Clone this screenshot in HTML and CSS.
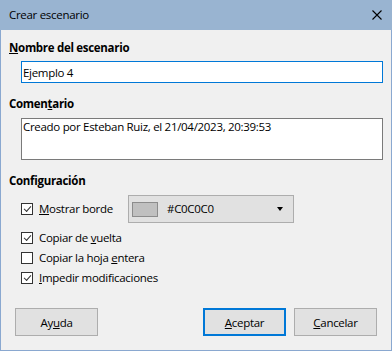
FILE: index.html
```html
<!DOCTYPE html>
<html lang="es">
<head>
  <meta charset="UTF-8" />
  <title>Crear escenario</title>
  <link rel="stylesheet" href="styles.css">
</head>
<body>
  <div class="dialog">
    <div class="titlebar">
      <span class="title">Crear escenario</span>
      <svg class="close" width="10" height="10" viewBox="0 0 10 10">
        <path d="M0.5 0.5 L9.5 9.5 M9.5 0.5 L0.5 9.5" stroke="#000" stroke-width="1.1" fill="none"/>
      </svg>
    </div>

    <div class="content">
      <div class="section-label"><u>N</u>ombre del escenario</div>
      <input class="field name-field" type="text" value="Ejemplo 4" />

      <div class="section-label gap"><span>Comen<u>t</u>ario</span></div>
      <textarea class="field comment-field">Creado por Esteban Ruiz, el 21/04/2023, 20:39:53</textarea>

      <div class="section-label gap">Configuración</div>
      <div class="options">
        <div class="option first">
          <label class="check-label wide"><span class="box checked"></span><span><u>M</u>ostrar borde</span></label>
          <div class="color-select">
            <span class="swatch"></span>
            <span class="color-name">#C0C0C0</span>
            <span class="arrow"></span>
          </div>
        </div>
        <div class="option">
          <label class="check-label"><span class="box checked"></span><span>Copiar de <u>v</u>uelta</span></label>
        </div>
        <div class="option">
          <label class="check-label"><span class="box"></span><span>Copiar la hoja <u>e</u>ntera</span></label>
        </div>
        <div class="option">
          <label class="check-label"><span class="box checked"></span><span><u>I</u>mpedir modificaciones</span></label>
        </div>
      </div>

      <div class="buttons">
        <button class="btn">Ay<u>u</u>da</button>
        <div class="spacer"></div>
        <button class="btn default"><u>A</u>ceptar</button>
        <button class="btn"><u>C</u>ancelar</button>
      </div>
    </div>
  </div>
</body>
</html>
```

FILE: styles.css
```css
body {
  margin: 0;
  padding: 0;
  font-family: 'Open Sans', 'Noto Sans', sans-serif;
  font-size: 11.5px;
  letter-spacing: -0.3px;
  color: #000;
  background: #f0f0f0;
}

.dialog {
  width: 392px;
  height: 351px;
  box-sizing: border-box;
  border: 1px solid #8aa8d0;
  border-top: none;
  background: #f0f0f0;
}

.titlebar {
  height: 30px;
  margin: 0 -1px;
  background: #99b4d1;
  display: flex;
  align-items: center;
  justify-content: space-between;
  padding: 0 10px 0 9px;
}

.title {
  line-height: 16px;
}

.close {
  display: block;
}

.content {
  padding: 10px 8px 0 8px;
}

.section-label {
  font-weight: bold;
  line-height: 16px;
  height: 16px;
}

.section-label.gap {
  margin-top: 13px;
}

.field {
  display: block;
  box-sizing: border-box;
  margin: 5px 0 0 12px;
  width: 362px;
  font-family: inherit;
  font-size: 11.5px;
  letter-spacing: -0.3px;
  color: #000;
  background: #fff;
  outline: none;
}

.name-field {
  height: 22px;
  border: 1px solid #0078d7;
  padding: 0 1px;
}

.comment-field {
  height: 42px;
  margin-top: 6px;
  border: 1px solid #7a7a7a;
  padding: 0 1px;
  line-height: 16px;
  resize: none;
  overflow: hidden;
}

.options {
  margin: 6px 0 0 12px;
}

.option {
  height: 20px;
  display: flex;
  align-items: center;
}

.option.first {
  height: 28px;
  margin-bottom: 5px;
}

.check-label {
  display: flex;
  align-items: center;
  line-height: 16px;
}

.check-label.wide {
  width: 107px;
}

.box {
  width: 12px;
  height: 12px;
  box-sizing: border-box;
  border: 1px solid #333;
  background: #fff;
  margin-right: 6px;
  position: relative;
}

.box.checked::after {
  content: "";
  position: absolute;
  left: 2px;
  top: 0px;
  width: 6px;
  height: 3px;
  border-left: 1px solid #333;
  border-bottom: 1px solid #333;
  transform: translate(0, 2px) rotate(-48deg);
  transform-origin: center;
}

.color-select {
  width: 166px;
  height: 28px;
  box-sizing: border-box;
  border: 1px solid #adadad;
  background: #e1e1e1;
  display: flex;
  align-items: center;
  padding-left: 3px;
}

.swatch {
  width: 26px;
  height: 15px;
  box-sizing: border-box;
  border: 1px solid #8c8c8c;
  background: #c0c0c0;
}

.color-name {
  margin-left: 9px;
  line-height: 16px;
  flex: 1;
}

.arrow {
  width: 0;
  height: 0;
  border-left: 3.5px solid transparent;
  border-right: 3.5px solid transparent;
  border-top: 4px solid #000;
  margin-right: 10px;
}

.buttons {
  display: flex;
  margin: 20px 6px 0 6px;
  gap: 8px;
}

.spacer {
  flex: 1;
}

.btn {
  width: 83px;
  height: 28px;
  box-sizing: border-box;
  border: 1px solid #adadad;
  background: #e1e1e1;
  font-family: inherit;
  font-size: 11.5px;
  letter-spacing: -0.3px;
  color: #000;
  padding: 0;
}

.btn.default {
  border: 2px solid #0078d7;
}
```
